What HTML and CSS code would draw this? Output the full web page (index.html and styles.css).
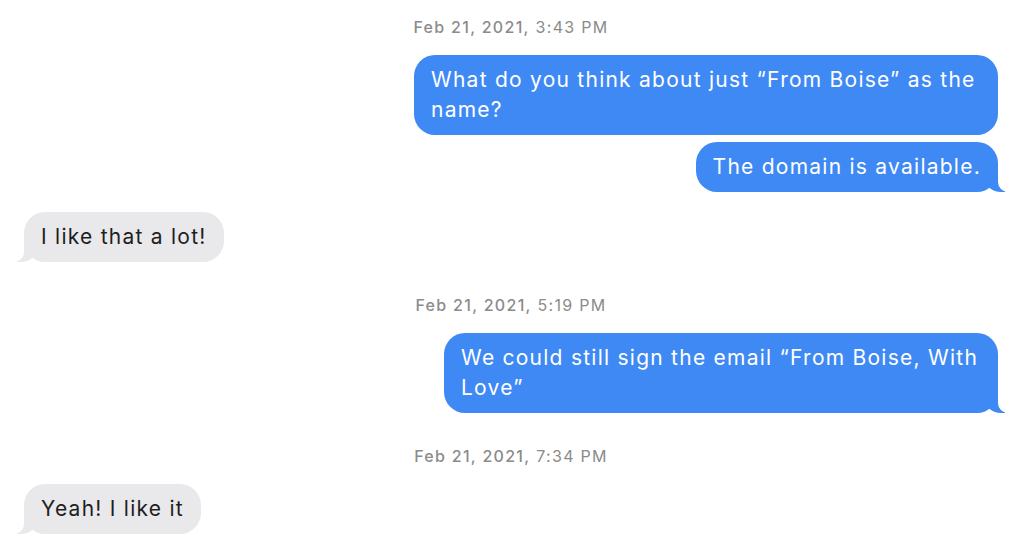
FILE: index.html
```html
<!DOCTYPE html>
<html>
<head>
<meta charset="utf-8">
<link rel="stylesheet" href="styles.css">
</head>
<body>
<div class="chat">
  <div class="stamp"><b>Feb 21, 2021,</b> 3:43 PM</div>
  <div class="msg out first"><span>What do you think about just “From Boise” as the name?</span></div>
  <div class="msg out tail close"><span>The domain is available.</span></div>
  <div class="msg in tail gap"><span>I like that a lot!</span></div>
  <div class="stamp s2"><b>Feb 21, 2021,</b> 5:19 PM</div>
  <div class="msg out tail w3"><span>We could still sign the email “From Boise, With Love”</span></div>
  <div class="stamp s3"><b>Feb 21, 2021,</b> 7:34 PM</div>
  <div class="msg in tail"><span>Yeah! I like it</span></div>
</div>
</body>
</html>
```
FILE: styles.css
```css
html, body {
  margin: 0;
  padding: 0;
  background: #ffffff;
}
.chat {
  display: flex;
  flex-direction: column;
  padding: 17px 26px 0 24px;
  font-family: "Inter", "Liberation Sans", Arial, sans-serif;
}
.stamp {
  align-self: center;
  font-size: 16px;
  line-height: 20px;
  letter-spacing: 1.3px;
  color: #8b8b8b;
  margin-bottom: 18px;
}
.stamp b {
  font-weight: 500;
}
.s2 {
  margin-top: 33px;
}
.s3 {
  margin-top: 33px;
}
.msg {
  position: relative;
  max-width: 584px;
  box-sizing: border-box;
  padding: 10px 17px 10px;
  border-radius: 21px;
  font-size: 21px;
  line-height: 30px;
  letter-spacing: 1.25px;
}
.msg span {
  position: relative;
  z-index: 2;
}
.out {
  align-self: flex-end;
  background: #3f89f5;
  color: #ffffff;
}
.in {
  align-self: flex-start;
  background: #e9e9eb;
  color: #1e1e1e;
}
.close {
  margin-top: 7px;
}
.gap {
  margin-top: 20px;
}
.w3 {
  max-width: 554px;
}
.out.tail::before {
  content: "";
  position: absolute;
  z-index: 0;
  bottom: 0;
  right: -7px;
  width: 20px;
  height: 20px;
  background: #3f89f5;
  border-bottom-left-radius: 16px 14px;
}
.out.tail::after {
  content: "";
  position: absolute;
  z-index: 1;
  bottom: 0;
  right: -10px;
  width: 10px;
  height: 20px;
  background: #ffffff;
  border-bottom-left-radius: 10px;
}
.in.tail::before {
  content: "";
  position: absolute;
  z-index: 0;
  bottom: 0;
  left: -7px;
  width: 20px;
  height: 20px;
  background: #e9e9eb;
  border-bottom-right-radius: 16px 14px;
}
.in.tail::after {
  content: "";
  position: absolute;
  z-index: 1;
  bottom: 0;
  left: -10px;
  width: 10px;
  height: 20px;
  background: #ffffff;
  border-bottom-right-radius: 10px;
}
```
